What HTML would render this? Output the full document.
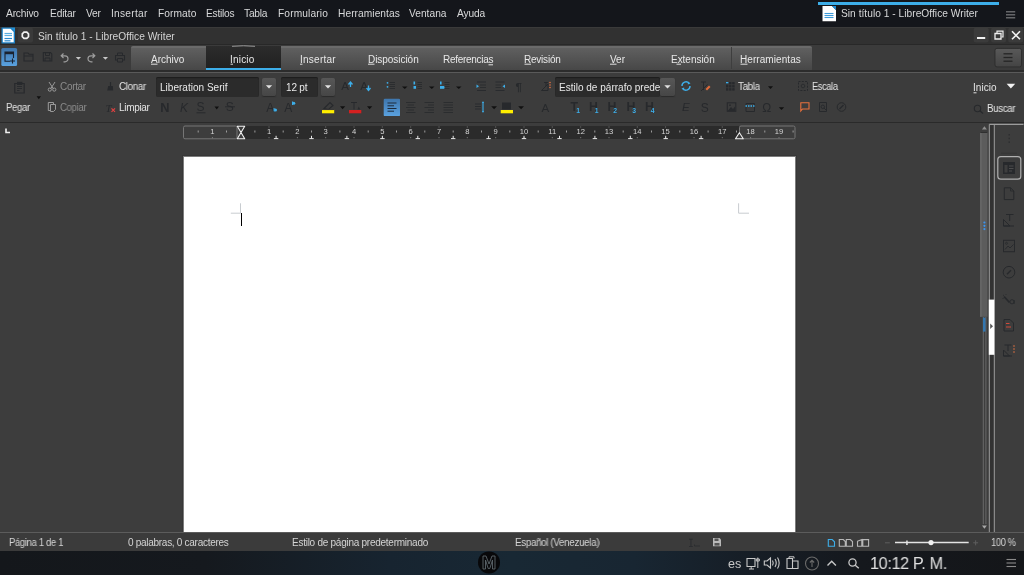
<!DOCTYPE html>
<html><head><meta charset="utf-8"><style>
html,body{margin:0;padding:0;}
body{width:1024px;height:575px;overflow:hidden;position:relative;background:#3d3d3d;font-family:"Liberation Sans",sans-serif;}
body>div{position:absolute;}
.t{white-space:nowrap;line-height:normal;-webkit-font-smoothing:antialiased;will-change:transform;}
svg{position:absolute;overflow:visible;}
</style></head><body>
<div style="left:0px;top:0px;width:1024px;height:27px;background:#14161b;"></div>
<div style="left:818px;top:2px;width:181px;height:2.5px;background:#3daee9;"></div>
<div style="left:0px;top:27px;width:1024px;height:18px;background:#313131;"></div>
<div style="left:0px;top:27px;width:1024px;height:1px;background:#3a3a3a;"></div>
<div style="left:0px;top:44px;width:1024px;height:1px;background:#282828;"></div>
<div style="left:0px;top:45px;width:1024px;height:27px;background:#3b3b3b;"></div>
<div style="left:131px;top:46px;width:681px;height:24px;background:linear-gradient(#6a6a6a 0px,#6a6a6a 1.5px,#5f5f5f 2.5px,#474747 100%);border-radius:2px 2px 0 0;"></div>
<div style="left:206px;top:46px;width:75px;height:24px;background:linear-gradient(#2c2c2c,#202020);"></div>
<div style="left:0px;top:70px;width:1024px;height:2px;background:#2c2c2c;"></div>
<div style="left:206px;top:68.3px;width:75px;height:2px;background:#3daee9;"></div>
<div style="left:0px;top:72px;width:1024px;height:1px;background:#5a5a5a;"></div>
<div style="left:0px;top:73px;width:1024px;height:49px;background:#3c3c3c;"></div>
<div style="left:0px;top:122px;width:1024px;height:1px;background:#2a2a2a;"></div>
<div style="left:156px;top:77px;width:103px;height:20px;background:#2b2b2b;box-shadow:inset 0 1px 1px #1c1c1c;border-radius:2px;"></div>
<div style="left:262px;top:78px;width:14px;height:18px;background:linear-gradient(#575757,#464646);border-radius:2px;box-shadow:0 1px 1px #2a2a2a;"></div>
<div style="left:281px;top:77px;width:37px;height:20px;background:#2b2b2b;box-shadow:inset 0 1px 1px #1c1c1c;border-radius:2px;"></div>
<div style="left:321px;top:78px;width:14px;height:18px;background:linear-gradient(#575757,#464646);border-radius:2px;box-shadow:0 1px 1px #2a2a2a;"></div>
<div style="left:555px;top:77px;width:105px;height:20px;background:#2b2b2b;box-shadow:inset 0 1px 1px #1c1c1c;border-radius:2px;overflow:hidden;"></div>
<div style="left:660px;top:78px;width:15px;height:18px;background:linear-gradient(#575757,#464646);border-radius:2px;box-shadow:0 1px 1px #2a2a2a;"></div>
<div style="left:384px;top:99px;width:16px;height:17px;background:linear-gradient(#5196d6,#3a79b8);border-radius:2px;"></div>
<div style="left:0px;top:123px;width:1024px;height:409px;background:#3d3d3d;"></div>
<div style="left:182px;top:155px;width:615px;height:377px;background:#373737;"></div>
<div style="left:183px;top:156px;width:613px;height:376px;background:#7c7c7c;"></div>
<div style="left:184px;top:157px;width:611px;height:375px;background:#ffffff;"></div>
<div style="left:240.5px;top:213px;width:1.6px;height:12.8px;background:#000;"></div>
<div style="left:0px;top:532px;width:1024px;height:1px;background:#5a5a5a;"></div>
<div style="left:0px;top:533px;width:1024px;height:18px;background:#3b3b3b;"></div>
<div style="left:0px;top:551px;width:1024px;height:24px;background:linear-gradient(90deg,#14171b 0%,#15191e 20%,#172430 38%,#182834 50%,#182632 62%,#161d25 74%,#15181d 84%,#141619 100%);"></div>
<div class="t" style="left:5.90px;top:8.00px;font-size:10.2px;color:#d8d9da;letter-spacing:-0.162px;font-family:'Liberation Sans';font-weight:normal;">Archivo</div>
<div class="t" style="left:49.70px;top:8.00px;font-size:10.2px;color:#d8d9da;letter-spacing:-0.163px;font-family:'Liberation Sans';font-weight:normal;">Editar</div>
<div class="t" style="left:86.00px;top:8.00px;font-size:10.2px;color:#d8d9da;letter-spacing:-0.245px;font-family:'Liberation Sans';font-weight:normal;">Ver</div>
<div class="t" style="left:111.30px;top:8.00px;font-size:10.2px;color:#d8d9da;letter-spacing:0.252px;font-family:'Liberation Sans';font-weight:normal;">Insertar</div>
<div class="t" style="left:157.50px;top:8.00px;font-size:10.2px;color:#d8d9da;letter-spacing:0.078px;font-family:'Liberation Sans';font-weight:normal;">Formato</div>
<div class="t" style="left:205.80px;top:8.00px;font-size:10.2px;color:#d8d9da;letter-spacing:-0.234px;font-family:'Liberation Sans';font-weight:normal;">Estilos</div>
<div class="t" style="left:244.20px;top:8.00px;font-size:10.2px;color:#d8d9da;letter-spacing:-0.213px;font-family:'Liberation Sans';font-weight:normal;">Tabla</div>
<div class="t" style="left:278.00px;top:8.00px;font-size:10.2px;color:#d8d9da;letter-spacing:0.135px;font-family:'Liberation Sans';font-weight:normal;">Formulario</div>
<div class="t" style="left:338.00px;top:8.00px;font-size:10.2px;color:#d8d9da;letter-spacing:0.060px;font-family:'Liberation Sans';font-weight:normal;">Herramientas</div>
<div class="t" style="left:409.20px;top:8.00px;font-size:10.2px;color:#d8d9da;letter-spacing:0.018px;font-family:'Liberation Sans';font-weight:normal;">Ventana</div>
<div class="t" style="left:456.80px;top:8.00px;font-size:10.2px;color:#d8d9da;letter-spacing:-0.125px;font-family:'Liberation Sans';font-weight:normal;">Ayuda</div>
<div class="t" style="left:841.30px;top:8.00px;font-size:10.2px;color:#d8d9da;letter-spacing:0.026px;font-family:'Liberation Sans';font-weight:normal;">Sin título 1 - LibreOffice Writer</div>
<div class="t" style="left:37.50px;top:31.00px;font-size:10.2px;color:#d4d4d4;letter-spacing:0.021px;font-family:'Liberation Sans';font-weight:normal;">Sin título 1 - LibreOffice Writer</div>
<div class="t" style="left:150.80px;top:54.00px;font-size:10px;color:#e8e8e8;letter-spacing:-0.024px;font-family:'Liberation Sans';font-weight:normal;">Archivo</div>
<div class="t" style="left:230.00px;top:54.00px;font-size:10px;color:#e8e8e8;letter-spacing:0.191px;font-family:'Liberation Sans';font-weight:normal;">Inicio</div>
<div class="t" style="left:299.80px;top:54.00px;font-size:10px;color:#e8e8e8;letter-spacing:0.257px;font-family:'Liberation Sans';font-weight:normal;">Insertar</div>
<div class="t" style="left:367.80px;top:54.00px;font-size:10px;color:#e8e8e8;letter-spacing:-0.043px;font-family:'Liberation Sans';font-weight:normal;">Disposición</div>
<div class="t" style="left:442.60px;top:54.00px;font-size:10px;color:#e8e8e8;letter-spacing:-0.286px;font-family:'Liberation Sans';font-weight:normal;">Referencias</div>
<div class="t" style="left:524.40px;top:54.00px;font-size:10px;color:#e8e8e8;letter-spacing:-0.221px;font-family:'Liberation Sans';font-weight:normal;">Revisión</div>
<div class="t" style="left:610.00px;top:54.00px;font-size:10px;color:#e8e8e8;letter-spacing:-0.005px;font-family:'Liberation Sans';font-weight:normal;">Ver</div>
<div class="t" style="left:670.70px;top:54.00px;font-size:10px;color:#e8e8e8;letter-spacing:-0.027px;font-family:'Liberation Sans';font-weight:normal;">Extensión</div>
<div class="t" style="left:740.30px;top:54.00px;font-size:10px;color:#e8e8e8;letter-spacing:0.071px;font-family:'Liberation Sans';font-weight:normal;">Herramientas</div>
<div class="t" style="left:6.25px;top:102.00px;font-size:10px;color:#e0e0e0;letter-spacing:-0.350px;font-family:'Liberation Sans';font-weight:normal;transform:scaleX(0.9591);transform-origin:0 0;">Pegar</div>
<div class="t" style="left:60.20px;top:81.00px;font-size:10px;color:#8c8c8c;letter-spacing:-0.317px;font-family:'Liberation Sans';font-weight:normal;">Cortar</div>
<div class="t" style="left:60.20px;top:102.00px;font-size:10px;color:#8c8c8c;letter-spacing:-0.350px;font-family:'Liberation Sans';font-weight:normal;transform:scaleX(0.9564);transform-origin:0 0;">Copiar</div>
<div class="t" style="left:118.75px;top:81.00px;font-size:10px;color:#e4e4e4;letter-spacing:-0.350px;font-family:'Liberation Sans';font-weight:normal;transform:scaleX(0.9763);transform-origin:0 0;">Clonar</div>
<div class="t" style="left:118.75px;top:102.00px;font-size:10px;color:#e4e4e4;letter-spacing:-0.306px;font-family:'Liberation Sans';font-weight:normal;">Limpiar</div>
<div class="t" style="left:160.00px;top:82.00px;font-size:10px;color:#e8e8e8;letter-spacing:0.016px;font-family:'Liberation Sans';font-weight:normal;">Liberation Serif</div>
<div class="t" style="left:285.50px;top:82.00px;font-size:10px;color:#e8e8e8;letter-spacing:-0.185px;font-family:'Liberation Sans';font-weight:normal;">12 pt</div>
<div class="t" style="left:558.60px;top:82.00px;font-size:10px;color:#e8e8e8;letter-spacing:0.010px;font-family:'Liberation Sans';font-weight:normal;">Estilo de párrafo prede</div>
<div class="t" style="left:738.20px;top:81.00px;font-size:10px;color:#e4e4e4;letter-spacing:-0.350px;font-family:'Liberation Sans';font-weight:normal;transform:scaleX(0.9775);transform-origin:0 0;">Tabla</div>
<div class="t" style="left:811.60px;top:81.00px;font-size:10px;color:#e4e4e4;letter-spacing:-0.350px;font-family:'Liberation Sans';font-weight:normal;transform:scaleX(0.9199);transform-origin:0 0;">Escala</div>
<div class="t" style="left:973.30px;top:82.00px;font-size:10px;color:#e4e4e4;letter-spacing:0.051px;font-family:'Liberation Sans';font-weight:normal;">Inicio</div>
<div class="t" style="left:987.00px;top:103.00px;font-size:10px;color:#e4e4e4;letter-spacing:-0.350px;font-family:'Liberation Sans';font-weight:normal;transform:scaleX(0.9737);transform-origin:0 0;">Buscar</div>
<div class="t" style="left:8.75px;top:537.00px;font-size:10px;color:#d4d4d4;letter-spacing:-0.350px;font-family:'Liberation Sans';font-weight:normal;transform:scaleX(0.9475);transform-origin:0 0;">Página 1 de 1</div>
<div class="t" style="left:127.50px;top:537.00px;font-size:10px;color:#d4d4d4;letter-spacing:-0.284px;font-family:'Liberation Sans';font-weight:normal;">0 palabras, 0 caracteres</div>
<div class="t" style="left:291.75px;top:537.00px;font-size:10px;color:#d4d4d4;letter-spacing:-0.258px;font-family:'Liberation Sans';font-weight:normal;">Estilo de página predeterminado</div>
<div class="t" style="left:515.00px;top:537.00px;font-size:10px;color:#d4d4d4;letter-spacing:-0.350px;font-family:'Liberation Sans';font-weight:normal;transform:scaleX(0.9827);transform-origin:0 0;">Español (Venezuela)</div>
<div class="t" style="left:991.00px;top:537.00px;font-size:10px;color:#d4d4d4;letter-spacing:-0.350px;font-family:'Liberation Sans';font-weight:normal;transform:scaleX(0.9275);transform-origin:0 0;">100 %</div>
<div class="t" style="left:869.80px;top:554.00px;font-size:16.5px;color:#e0e0e0;letter-spacing:-0.350px;font-family:'Liberation Sans';font-weight:normal;transform:scaleX(0.9803);transform-origin:0 0;">10:12 P. M.</div>
<div class="t" style="left:727.60px;top:557.00px;font-size:12.6px;color:#c8c8c8;letter-spacing:0.099px;font-family:'Liberation Sans';font-weight:normal;">es</div>
<svg style="left:0;top:0;" width="1024" height="575" viewBox="0 0 1024 575"><defs><linearGradient id="gblue" x1="0" y1="0" x2="0" y2="1"><stop offset="0" stop-color="#3f76ad"/><stop offset="1" stop-color="#5aa2e0"/></linearGradient><linearGradient id="gbtn" x1="0" y1="0" x2="0" y2="1"><stop offset="0" stop-color="#595959"/><stop offset="1" stop-color="#444444"/></linearGradient></defs><path d="M1.5 27.5H11L15 31.5V43.5H1.5Z" fill="#1a7fc4"/><path d="M2.8 28.8H10.5L13.7 32V42.2H2.8Z" fill="#ffffff"/><path d="M10.5 27.5L15 32V27.5Z" fill="#1e8fd8"/><path d="M4.5 33.5H12" stroke="#5aaee0" stroke-width="1.2"/><path d="M4.5 35.5H12" stroke="#5aaee0" stroke-width="1.2"/><path d="M4.5 38.5H12" stroke="#2a8ad0" stroke-width="1.2"/><path d="M4.5 40.8H10.5" stroke="#2a8ad0" stroke-width="1.2"/><rect x="18" y="27.6" width="15" height="15" rx="2" fill="#3a3a3a"/><path d="M24 32.2H26.8L28.5 33.9V36.7L26.8 38.4H24L22.3 36.7V33.9Z" fill="none" stroke="#f0f0f0" stroke-width="1.7"/><rect x="973.7" y="27.6" width="15" height="15" rx="2.5" fill="#3b3b3b"/><rect x="991" y="27.6" width="15" height="15" rx="2.5" fill="#3b3b3b"/><rect x="1008.2" y="27.6" width="15" height="15" rx="2.5" fill="#3b3b3b"/><path d="M977 38H985.2" stroke="#f2f2f2" stroke-width="2"/><path d="M995 33.5H1001V39H995Z" fill="none" stroke="#eeeeee" stroke-width="1.3"/><path d="M997 33V31.2H1003V37H1001.5" fill="none" stroke="#eeeeee" stroke-width="1.2"/><path d="M1012 31.3L1020 39.3M1020 31.3L1012 39.3" stroke="#f2f2f2" stroke-width="1.6"/><path d="M822.5 6H832L836 10V21.3H822.5Z" fill="#ffffff"/><path d="M832 6L836 10V6Z" fill="#1e8fd8"/><path d="M824.5 13.5H833.5" stroke="#3d9ad8" stroke-width="1.1"/><path d="M824.5 15.5H833.5" stroke="#3d9ad8" stroke-width="1.1"/><path d="M824.5 17.5H833.5" stroke="#3d9ad8" stroke-width="1.1"/><path d="M1006 11.8H1015.2" stroke="#7a7b7d" stroke-width="1.2"/><path d="M1006 14.8H1015.2" stroke="#7a7b7d" stroke-width="1.2"/><path d="M1006 17.8H1015.2" stroke="#7a7b7d" stroke-width="1.2"/><rect x="1.3" y="48" width="15.8" height="18.1" rx="1.5" fill="url(#gblue)"/><path d="M10 61.3H5V52H13.5V58" fill="none" stroke="#1a2230" stroke-width="1.1"/><rect x="5" y="52" width="8.5" height="2.2" fill="#1a2230"/><path d="M12.5 58.5V63.5M10 61H15" stroke="#1a2230" stroke-width="1.1"/><path d="M24 53H28L29 54.2H33V61H24Z" fill="none" stroke="#27292c" stroke-width="1.1"/><path d="M24 56H33" stroke="#27292c"/><path d="M43.3 52.6H50.5L51.8 54V61H43.3Z" fill="none" stroke="#27292c" stroke-width="1.1"/><path d="M45.5 52.6V55.5H49.5V52.6M45 61V58H50V61" fill="none" stroke="#27292c"/><path d="M63.5 53.5L61.2 55.8L63.5 58M61.5 55.8H65A3 3 0 0 1 65 61.8H63.5" fill="none" stroke="#9d9d9d" stroke-width="1.2"/><path d="M75.8 57H81L78.4 59.8Z" fill="#c8c8c8"/><path d="M92.5 53.5L94.8 55.8L92.5 58M94.5 55.8H91A3 3 0 0 0 91 61.8H92.5" fill="none" stroke="#9d9d9d" stroke-width="1.2"/><path d="M102.8 57H108L105.4 59.8Z" fill="#c8c8c8"/><path d="M117.5 53H122.5V55.5H117.5Z" fill="none" stroke="#27292c"/><path d="M115.5 55.5H124.5V60H115.5Z" fill="none" stroke="#27292c" stroke-width="1.1"/><path d="M117.5 58.5H122.5V62H117.5Z" fill="#3b3b3b" stroke="#27292c"/><rect x="995" y="48.4" width="26.5" height="18.5" rx="2" fill="url(#gbtn)" stroke="#2a2a2a" stroke-width="0.8"/><path d="M1003.5 53.8H1012.5" stroke="#252525" stroke-width="1.3"/><path d="M1003.5 57.5H1012.5" stroke="#252525" stroke-width="1.3"/><path d="M1003.5 61.2H1012.5" stroke="#252525" stroke-width="1.3"/><path d="M232 46.3Q243.5 45.2 255 46.3" stroke="#9a9a9a" stroke-width="1" fill="none"/><path d="M731.5 47V69" stroke="#3e3e3e" stroke-width="1"/><path d="M151 64.2H157.5" stroke="#e0e0e0" stroke-width="1"/><path d="M230.5 64.2H233" stroke="#e0e0e0" stroke-width="1"/><path d="M300 64.2H302.5" stroke="#e0e0e0" stroke-width="1"/><path d="M368 64.2H374.5" stroke="#e0e0e0" stroke-width="1"/><path d="M488.5 64.8H493" stroke="#e0e0e0" stroke-width="1"/><path d="M524.5 64.2H531" stroke="#e0e0e0" stroke-width="1"/><path d="M610 64.2H616.5" stroke="#e0e0e0" stroke-width="1"/><path d="M676.5 64.2H681" stroke="#e0e0e0" stroke-width="1"/><path d="M740.5 64.2H747.5" stroke="#e0e0e0" stroke-width="1"/><path d="M973.5 92.8H976.5" stroke="#e0e0e0" stroke-width="1"/><path d="M14.8 83.5H24.2V93H14.8Z" fill="none" stroke="#27292c" stroke-width="1.2"/><rect x="17" y="81.8" width="5.4" height="3.2" fill="#27292c"/><path d="M17 86.5H22" stroke="#27292c" stroke-width="0.9"/><path d="M17 88.5H22" stroke="#27292c" stroke-width="0.9"/><path d="M17 90.5H19.5" stroke="#27292c" stroke-width="0.9"/><path d="M36.6 96.3H41L38.8 99.2Z" fill="#101010"/><path d="M49 82L53.5 89M55 82L50.5 89" stroke="#9a9a9a" stroke-width="1"/><circle cx="49.8" cy="89.6" r="1.6" fill="none" stroke="#9a9a9a"/><circle cx="54.3" cy="89.6" r="1.6" fill="none" stroke="#9a9a9a"/><path d="M48.3 102.5H53.5V104.5M48.3 102.5V110.5H50" fill="none" stroke="#9a9a9a" stroke-width="1"/><path d="M50.5 104.5H55.5V109.5L53.5 111.5H50.5Z" fill="none" stroke="#9a9a9a" stroke-width="1"/><path d="M110.5 82V86" stroke="#27292c" stroke-width="1.2"/><path d="M108.2 86H112.8L113.2 90.5H107.2Z" fill="#27292c"/><text x="105.5" y="111.5" font-family="Liberation Serif" font-size="11" fill="#27292c" font-weight="normal" font-style="italic" text-anchor="start">T</text><path d="M111.5 108.3L115 111.8M115 108.3L111.5 111.8" stroke="#e04040" stroke-width="1.2"/><text x="341.3" y="90.4" font-family="Liberation Sans" font-size="11.5" fill="#27292c" font-weight="normal" font-style="normal" text-anchor="start">A</text><path d="M348.5 84.5L350.5 82L352.5 84.5M350.5 82V87" fill="none" stroke="#3daee9" stroke-width="1.3"/><text x="360.3" y="90.4" font-family="Liberation Sans" font-size="11.5" fill="#27292c" font-weight="normal" font-style="normal" text-anchor="start">A</text><path d="M366.5 88L368.5 90.5L370.5 88M368.5 85.5V90.5" fill="none" stroke="#3daee9" stroke-width="1.3"/><circle cx="387.5" cy="82.8" r="0.9" fill="#3daee9"/><circle cx="387.5" cy="86.8" r="0.9" fill="#3daee9"/><path d="M389.5 82.5H395" stroke="#27292c" stroke-width="0.8"/><path d="M389.5 84.5H395" stroke="#27292c" stroke-width="0.8"/><path d="M389.5 86.5H395" stroke="#27292c" stroke-width="0.8"/><path d="M389.5 88.5H395" stroke="#27292c" stroke-width="0.8"/><path d="M402 86.5H407.5L404.75 89Z" fill="#101010"/><rect x="413.5" y="81.5" width="1.6" height="3" fill="#3daee9"/><rect x="413.5" y="86" width="2.5" height="2.8" fill="#3daee9"/><path d="M417.5 82.5H422" stroke="#27292c" stroke-width="0.8"/><path d="M417.5 84.5H422" stroke="#27292c" stroke-width="0.8"/><path d="M417.5 86.5H422" stroke="#27292c" stroke-width="0.8"/><path d="M417.5 88.5H422" stroke="#27292c" stroke-width="0.8"/><path d="M429 86.5H434.5L431.75 89Z" fill="#101010"/><rect x="440" y="81.5" width="1.6" height="3" fill="#3daee9"/><rect x="440" y="86" width="4.5" height="2.8" fill="#3daee9"/><path d="M444.5 82.5H449.5" stroke="#27292c" stroke-width="0.8"/><path d="M444.5 84.5H449.5" stroke="#27292c" stroke-width="0.8"/><path d="M444.5 86.5H449.5" stroke="#27292c" stroke-width="0.8"/><path d="M444.5 88.5H449.5" stroke="#27292c" stroke-width="0.8"/><path d="M456 86.5H461.5L458.75 89Z" fill="#101010"/><path d="M477 82H486" stroke="#27292c" stroke-width="0.9"/><path d="M477 90.5H486" stroke="#27292c" stroke-width="0.9"/><path d="M480 85H486" stroke="#27292c" stroke-width="0.8"/><path d="M480 87.5H486" stroke="#27292c" stroke-width="0.8"/><path d="M476.5 84.5L479 86.3L476.5 88Z" fill="#3daee9"/><path d="M495.5 82H504.5" stroke="#27292c" stroke-width="0.9"/><path d="M495.5 90.5H504.5" stroke="#27292c" stroke-width="0.9"/><path d="M495.5 85H501" stroke="#27292c" stroke-width="0.8"/><path d="M495.5 87.5H501" stroke="#27292c" stroke-width="0.8"/><path d="M505 84.5L502.5 86.3L505 88Z" fill="#3daee9"/><text x="515.5" y="90.5" font-family="Liberation Sans" font-size="11.5" fill="#27292c" font-weight="bold" font-style="normal" text-anchor="start">¶</text><path d="M541.5 90.5L548 84V90.5Z M544 82.5H548M546 82.5V86" fill="none" stroke="#27292c" stroke-width="1"/><circle cx="550" cy="82.5" r="0.8" fill="#e07040"/><circle cx="550" cy="85" r="0.8" fill="#e07040"/><circle cx="550" cy="87.5" r="0.8" fill="#e07040"/><path d="M682 86A4 4 0 0 1 689 83.2M690 86A4 4 0 0 1 683 88.8" fill="none" stroke="#3daee9" stroke-width="1.4"/><path d="M688 81.5L690.5 83.5L687.8 84.5Z M684 90.5L681.5 88.5L684.2 87.5Z" fill="#3daee9"/><path d="M701 82H706M703.5 82V90" stroke="#27292c" stroke-width="1"/><path d="M701 91L707.5 84.5" stroke="#27292c"/><path d="M705.5 89L709 85.5L710.5 87L707 90.5Z" fill="#e06a3a"/><g fill="#27292c"><rect x="726.0" y="82.0" width="2.4" height="2.4"/><rect x="726.0" y="85.1" width="2.4" height="2.4"/><rect x="726.0" y="88.2" width="2.4" height="2.4"/><rect x="729.1" y="82.0" width="2.4" height="2.4"/><rect x="729.1" y="85.1" width="2.4" height="2.4"/><rect x="729.1" y="88.2" width="2.4" height="2.4"/><rect x="732.2" y="82.0" width="2.4" height="2.4"/><rect x="732.2" y="85.1" width="2.4" height="2.4"/><rect x="732.2" y="88.2" width="2.4" height="2.4"/></g><rect x="726" y="82" width="2.4" height="1.4" fill="#3daee9"/><path d="M768 86.3H773L770.5 89Z" fill="#101010"/><rect x="798.5" y="81.5" width="9" height="9" fill="none" stroke="#27292c" stroke-dasharray="2 1.3"/><circle cx="803" cy="86" r="1.8" fill="none" stroke="#27292c" stroke-width="0.8"/><path d="M1006.6 83.8H1015.2L1010.9000000000001 88.5Z" fill="#f2f2f2"/><circle cx="977.5" cy="108.5" r="3.2" fill="none" stroke="#27292c" stroke-width="1.1"/><path d="M979.8 110.8L983 113.5" stroke="#27292c" stroke-width="1.2"/><text x="160.3" y="111.5" font-family="Liberation Sans" font-size="12.8" fill="#27292c" font-weight="bold" font-style="normal" text-anchor="start">N</text><text x="180" y="111.5" font-family="Liberation Sans" font-size="12" fill="#27292c" font-weight="normal" font-style="italic" text-anchor="start">K</text><text x="196.5" y="110.8" font-family="Liberation Sans" font-size="12" fill="#27292c" font-weight="normal" font-style="normal" text-anchor="start">S</text><path d="M196.5 112.8H205.5" stroke="#27292c" stroke-width="1"/><path d="M214.5 106.5H219L216.75 109.5Z" fill="#101010"/><text x="225.8" y="111.3" font-family="Liberation Sans" font-size="12" fill="#27292c" font-weight="normal" font-style="normal" text-anchor="start">S</text><path d="M225 106.8H235" stroke="#27292c" stroke-width="1"/><text x="266.3" y="111.5" font-family="Liberation Sans" font-size="12" fill="#27292c" font-weight="normal" font-style="normal" text-anchor="start">A</text><circle cx="275.5" cy="110" r="1.5" fill="#3daee9"/><path d="M274.1 108V111.5" stroke="#3daee9"/><text x="284.3" y="111.5" font-family="Liberation Sans" font-size="12" fill="#27292c" font-weight="normal" font-style="normal" text-anchor="start">A</text><circle cx="293.8" cy="103.2" r="1.5" fill="#3daee9"/><path d="M292.5 101.5V105" stroke="#3daee9"/><path d="M324 108.5L330 102.5L333 105.5L328.5 109.5Z" fill="none" stroke="#27292c" stroke-width="1.1"/><rect x="322" y="109.8" width="12.2" height="3.5" fill="#ffee00"/><path d="M322 109.6H334" stroke="#1a1a40" stroke-width="0.6"/><path d="M340 106.2H345.2L342.6 109.2Z" fill="#101010"/><path d="M351 102.5H357M354 102.5V109.5" stroke="#27292c" stroke-width="1"/><path d="M357.5 109.5L358.8 106.5L360.2 109.5Z" fill="#27292c"/><rect x="349" y="110" width="12.3" height="3.3" fill="#d42020"/><path d="M367 106.2H372.2L369.6 109.2Z" fill="#101010"/><rect x="383.7" y="98.8" width="16.3" height="17.3" rx="1.2" fill="url(#gblue)"/><path d="M387.5 103H396.5" stroke="#1e2a3a" stroke-width="1"/><path d="M387.5 108.5H396.5" stroke="#1e2a3a" stroke-width="1"/><path d="M387.5 105.8H394" stroke="#1e2a3a" stroke-width="1"/><path d="M387.5 111.2H394" stroke="#1e2a3a" stroke-width="1"/><path d="M406 102.5H415.5" stroke="#27292c" stroke-width="0.8"/><path d="M406 107.5H415.5" stroke="#27292c" stroke-width="0.8"/><path d="M406 112.5H415.5" stroke="#27292c" stroke-width="0.8"/><path d="M407.5 105H414" stroke="#27292c" stroke-width="0.8"/><path d="M407.5 110H414" stroke="#27292c" stroke-width="0.8"/><path d="M424.5 102.5H434" stroke="#27292c" stroke-width="0.8"/><path d="M424.5 107.5H434" stroke="#27292c" stroke-width="0.8"/><path d="M424.5 112.5H434" stroke="#27292c" stroke-width="0.8"/><path d="M428 105H434" stroke="#27292c" stroke-width="0.8"/><path d="M428 110H434" stroke="#27292c" stroke-width="0.8"/><path d="M443.5 102.5H453" stroke="#27292c" stroke-width="0.8"/><path d="M443.5 105H453" stroke="#27292c" stroke-width="0.8"/><path d="M443.5 107.5H453" stroke="#27292c" stroke-width="0.8"/><path d="M443.5 110H453" stroke="#27292c" stroke-width="0.8"/><path d="M443.5 112.5H453" stroke="#27292c" stroke-width="0.8"/><path d="M475 104H481" stroke="#27292c" stroke-width="0.9"/><path d="M475 106.5H481" stroke="#27292c" stroke-width="0.9"/><path d="M475 109H481" stroke="#27292c" stroke-width="0.9"/><path d="M483 102V112M482 102.3H484M482 111.7H484" stroke="#3daee9" stroke-width="1.1"/><path d="M491.2 106.2H497L494.1 109.2Z" fill="#101010"/><rect x="502" y="102.5" width="9" height="7" fill="#27292c"/><rect x="500.7" y="110" width="12.3" height="3.3" fill="#ffee00"/><path d="M518.2 106.2H524L521.1 109.2Z" fill="#101010"/><text x="541.5" y="111.5" font-family="Liberation Sans" font-size="11.5" fill="#27292c" font-weight="normal" font-style="normal" text-anchor="start">A</text><text x="570.5" y="111.3" font-family="Liberation Sans" font-size="12.3" fill="#27292c" font-weight="bold" font-style="normal" text-anchor="start">T</text><text x="576.3" y="112.6" font-family="Liberation Sans" font-size="6.8" fill="#3daee9" font-weight="bold" font-style="normal" text-anchor="start">1</text><text x="589" y="111.3" font-family="Liberation Sans" font-size="12.3" fill="#27292c" font-weight="bold" font-style="normal" text-anchor="start">H</text><text x="594.8" y="112.6" font-family="Liberation Sans" font-size="6.8" fill="#3daee9" font-weight="bold" font-style="normal" text-anchor="start">1</text><text x="607.5" y="111.3" font-family="Liberation Sans" font-size="12.3" fill="#27292c" font-weight="bold" font-style="normal" text-anchor="start">H</text><text x="613.3" y="112.6" font-family="Liberation Sans" font-size="6.8" fill="#3daee9" font-weight="bold" font-style="normal" text-anchor="start">2</text><text x="626.5" y="111.3" font-family="Liberation Sans" font-size="12.3" fill="#27292c" font-weight="bold" font-style="normal" text-anchor="start">H</text><text x="632.3" y="112.6" font-family="Liberation Sans" font-size="6.8" fill="#3daee9" font-weight="bold" font-style="normal" text-anchor="start">3</text><text x="645" y="111.3" font-family="Liberation Sans" font-size="12.3" fill="#27292c" font-weight="bold" font-style="normal" text-anchor="start">H</text><text x="650.8" y="112.6" font-family="Liberation Sans" font-size="6.8" fill="#3daee9" font-weight="bold" font-style="normal" text-anchor="start">4</text><text x="682" y="111.3" font-family="Liberation Sans" font-size="11.5" fill="#27292c" font-weight="normal" font-style="italic" text-anchor="start">E</text><text x="700.8" y="111.5" font-family="Liberation Sans" font-size="12" fill="#27292c" font-weight="normal" font-style="normal" text-anchor="start">S</text><rect x="727.3" y="102.8" width="8.5" height="8.5" fill="none" stroke="#27292c" stroke-width="1.1"/><path d="M728 110.5L731 107L733 109L735 106.5V111H728Z" fill="#27292c"/><circle cx="730" cy="105.2" r="0.9" fill="#27292c"/><path d="M746 103.5H754.5V111.5H746Z" fill="none" stroke="#27292c" stroke-width="1"/><path d="M745.5 106H755.5" stroke="#3daee9" stroke-width="1.4" stroke-dasharray="1.5 1"/><text x="762.3" y="111.6" font-family="Liberation Sans" font-size="12" fill="#27292c" font-weight="normal" font-style="normal" text-anchor="start">Ω</text><path d="M778.8 107.2H784.2L781.5 109.9Z" fill="#101010"/><path d="M800.3 102.8H809V109H802.5L800.8 111V102.8Z" fill="none" stroke="#e8703c" stroke-width="1.1"/><path d="M819.5 102.5H826.5V111.5H819.5Z" fill="none" stroke="#27292c" stroke-width="1"/><circle cx="822.8" cy="106.8" r="1.7" fill="none" stroke="#27292c" stroke-width="0.9"/><path d="M824 108L826 110" stroke="#27292c"/><circle cx="841.5" cy="107" r="4.3" fill="none" stroke="#27292c" stroke-width="1"/><path d="M839.5 109L843.5 105" stroke="#27292c" stroke-width="1.2"/><rect x="183.5" y="126" width="53.5" height="12.8" rx="1.5" fill="none" stroke="#767676" stroke-width="1"/><rect x="241" y="126" width="498" height="13" fill="#2b2b2b"/><rect x="739.5" y="126" width="55.5" height="12.8" rx="1.5" fill="none" stroke="#767676" stroke-width="1"/><text x="212.4" y="134.2" font-family="Liberation Sans" font-size="7.6" fill="#d6d6d6" text-anchor="middle">1</text><path d="M212.4 137.2V138.2" stroke="#9a9a9a" stroke-width="0.8"/><text x="269.0" y="134.2" font-family="Liberation Sans" font-size="7.6" fill="#d6d6d6" text-anchor="middle">1</text><path d="M269.0 137.2V138.2" stroke="#9a9a9a" stroke-width="0.8"/><text x="297.4" y="134.2" font-family="Liberation Sans" font-size="7.6" fill="#d6d6d6" text-anchor="middle">2</text><path d="M297.4 137.2V138.2" stroke="#9a9a9a" stroke-width="0.8"/><text x="325.7" y="134.2" font-family="Liberation Sans" font-size="7.6" fill="#d6d6d6" text-anchor="middle">3</text><path d="M325.7 137.2V138.2" stroke="#9a9a9a" stroke-width="0.8"/><text x="354.0" y="134.2" font-family="Liberation Sans" font-size="7.6" fill="#d6d6d6" text-anchor="middle">4</text><path d="M354.0 137.2V138.2" stroke="#9a9a9a" stroke-width="0.8"/><text x="382.3" y="134.2" font-family="Liberation Sans" font-size="7.6" fill="#d6d6d6" text-anchor="middle">5</text><path d="M382.3 137.2V138.2" stroke="#9a9a9a" stroke-width="0.8"/><text x="410.7" y="134.2" font-family="Liberation Sans" font-size="7.6" fill="#d6d6d6" text-anchor="middle">6</text><path d="M410.7 137.2V138.2" stroke="#9a9a9a" stroke-width="0.8"/><text x="439.0" y="134.2" font-family="Liberation Sans" font-size="7.6" fill="#d6d6d6" text-anchor="middle">7</text><path d="M439.0 137.2V138.2" stroke="#9a9a9a" stroke-width="0.8"/><text x="467.3" y="134.2" font-family="Liberation Sans" font-size="7.6" fill="#d6d6d6" text-anchor="middle">8</text><path d="M467.3 137.2V138.2" stroke="#9a9a9a" stroke-width="0.8"/><text x="495.7" y="134.2" font-family="Liberation Sans" font-size="7.6" fill="#d6d6d6" text-anchor="middle">9</text><path d="M495.7 137.2V138.2" stroke="#9a9a9a" stroke-width="0.8"/><text x="524.0" y="134.2" font-family="Liberation Sans" font-size="7.6" fill="#d6d6d6" text-anchor="middle">10</text><path d="M524.0 137.2V138.2" stroke="#9a9a9a" stroke-width="0.8"/><text x="552.3" y="134.2" font-family="Liberation Sans" font-size="7.6" fill="#d6d6d6" text-anchor="middle">11</text><path d="M552.3 137.2V138.2" stroke="#9a9a9a" stroke-width="0.8"/><text x="580.7" y="134.2" font-family="Liberation Sans" font-size="7.6" fill="#d6d6d6" text-anchor="middle">12</text><path d="M580.7 137.2V138.2" stroke="#9a9a9a" stroke-width="0.8"/><text x="609.0" y="134.2" font-family="Liberation Sans" font-size="7.6" fill="#d6d6d6" text-anchor="middle">13</text><path d="M609.0 137.2V138.2" stroke="#9a9a9a" stroke-width="0.8"/><text x="637.3" y="134.2" font-family="Liberation Sans" font-size="7.6" fill="#d6d6d6" text-anchor="middle">14</text><path d="M637.3 137.2V138.2" stroke="#9a9a9a" stroke-width="0.8"/><text x="665.6" y="134.2" font-family="Liberation Sans" font-size="7.6" fill="#d6d6d6" text-anchor="middle">15</text><path d="M665.6 137.2V138.2" stroke="#9a9a9a" stroke-width="0.8"/><text x="694.0" y="134.2" font-family="Liberation Sans" font-size="7.6" fill="#d6d6d6" text-anchor="middle">16</text><path d="M694.0 137.2V138.2" stroke="#9a9a9a" stroke-width="0.8"/><text x="722.3" y="134.2" font-family="Liberation Sans" font-size="7.6" fill="#d6d6d6" text-anchor="middle">17</text><path d="M722.3 137.2V138.2" stroke="#9a9a9a" stroke-width="0.8"/><text x="750.6" y="134.2" font-family="Liberation Sans" font-size="7.6" fill="#d6d6d6" text-anchor="middle">18</text><path d="M750.6 137.2V138.2" stroke="#9a9a9a" stroke-width="0.8"/><text x="779.0" y="134.2" font-family="Liberation Sans" font-size="7.6" fill="#d6d6d6" text-anchor="middle">19</text><path d="M779.0 137.2V138.2" stroke="#9a9a9a" stroke-width="0.8"/><path d="M198.2 130.5V132.5" stroke="#a8a8a8" stroke-width="0.9"/><path d="M226.5 130.5V132.5" stroke="#a8a8a8" stroke-width="0.9"/><path d="M254.9 130.5V132.5" stroke="#a8a8a8" stroke-width="0.9"/><path d="M283.2 130.5V132.5" stroke="#a8a8a8" stroke-width="0.9"/><path d="M311.5 130.5V132.5" stroke="#a8a8a8" stroke-width="0.9"/><path d="M339.9 130.5V132.5" stroke="#a8a8a8" stroke-width="0.9"/><path d="M368.2 130.5V132.5" stroke="#a8a8a8" stroke-width="0.9"/><path d="M396.5 130.5V132.5" stroke="#a8a8a8" stroke-width="0.9"/><path d="M424.8 130.5V132.5" stroke="#a8a8a8" stroke-width="0.9"/><path d="M453.2 130.5V132.5" stroke="#a8a8a8" stroke-width="0.9"/><path d="M481.5 130.5V132.5" stroke="#a8a8a8" stroke-width="0.9"/><path d="M509.8 130.5V132.5" stroke="#a8a8a8" stroke-width="0.9"/><path d="M538.2 130.5V132.5" stroke="#a8a8a8" stroke-width="0.9"/><path d="M566.5 130.5V132.5" stroke="#a8a8a8" stroke-width="0.9"/><path d="M594.8 130.5V132.5" stroke="#a8a8a8" stroke-width="0.9"/><path d="M623.2 130.5V132.5" stroke="#a8a8a8" stroke-width="0.9"/><path d="M651.5 130.5V132.5" stroke="#a8a8a8" stroke-width="0.9"/><path d="M679.8 130.5V132.5" stroke="#a8a8a8" stroke-width="0.9"/><path d="M708.1 130.5V132.5" stroke="#a8a8a8" stroke-width="0.9"/><path d="M736.5 130.5V132.5" stroke="#a8a8a8" stroke-width="0.9"/><path d="M764.8 130.5V132.5" stroke="#a8a8a8" stroke-width="0.9"/><path d="M793.1 130.5V132.5" stroke="#a8a8a8" stroke-width="0.9"/><path d="M269.0 126.5V127.5" stroke="#8a8a8a" stroke-width="0.8"/><path d="M297.4 126.5V127.5" stroke="#8a8a8a" stroke-width="0.8"/><path d="M325.7 126.5V127.5" stroke="#8a8a8a" stroke-width="0.8"/><path d="M354.0 126.5V127.5" stroke="#8a8a8a" stroke-width="0.8"/><path d="M382.3 126.5V127.5" stroke="#8a8a8a" stroke-width="0.8"/><path d="M410.7 126.5V127.5" stroke="#8a8a8a" stroke-width="0.8"/><path d="M439.0 126.5V127.5" stroke="#8a8a8a" stroke-width="0.8"/><path d="M467.3 126.5V127.5" stroke="#8a8a8a" stroke-width="0.8"/><path d="M495.7 126.5V127.5" stroke="#8a8a8a" stroke-width="0.8"/><path d="M524.0 126.5V127.5" stroke="#8a8a8a" stroke-width="0.8"/><path d="M552.3 126.5V127.5" stroke="#8a8a8a" stroke-width="0.8"/><path d="M580.7 126.5V127.5" stroke="#8a8a8a" stroke-width="0.8"/><path d="M609.0 126.5V127.5" stroke="#8a8a8a" stroke-width="0.8"/><path d="M637.3 126.5V127.5" stroke="#8a8a8a" stroke-width="0.8"/><path d="M665.6 126.5V127.5" stroke="#8a8a8a" stroke-width="0.8"/><path d="M694.0 126.5V127.5" stroke="#8a8a8a" stroke-width="0.8"/><path d="M722.3 126.5V127.5" stroke="#8a8a8a" stroke-width="0.8"/><path d="M273.9 138.6H278.3M276.1 138.6V135.8" stroke="#e8e8e8" stroke-width="1"/><path d="M309.3 138.6H313.7M311.5 138.6V135.8" stroke="#e8e8e8" stroke-width="1"/><path d="M344.7 138.6H349.1M346.9 138.6V135.8" stroke="#e8e8e8" stroke-width="1"/><path d="M380.2 138.6H384.6M382.4 138.6V135.8" stroke="#e8e8e8" stroke-width="1"/><path d="M415.6 138.6H420.0M417.8 138.6V135.8" stroke="#e8e8e8" stroke-width="1"/><path d="M451.0 138.6H455.4M453.2 138.6V135.8" stroke="#e8e8e8" stroke-width="1"/><path d="M486.4 138.6H490.8M488.6 138.6V135.8" stroke="#e8e8e8" stroke-width="1"/><path d="M521.8 138.6H526.2M524.0 138.6V135.8" stroke="#e8e8e8" stroke-width="1"/><path d="M557.3 138.6H561.7M559.5 138.6V135.8" stroke="#e8e8e8" stroke-width="1"/><path d="M592.7 138.6H597.1M594.9 138.6V135.8" stroke="#e8e8e8" stroke-width="1"/><path d="M628.1 138.6H632.5M630.3 138.6V135.8" stroke="#e8e8e8" stroke-width="1"/><path d="M663.5 138.6H667.9M665.7 138.6V135.8" stroke="#e8e8e8" stroke-width="1"/><path d="M698.9 138.6H703.3M701.1 138.6V135.8" stroke="#e8e8e8" stroke-width="1"/><path d="M237.3 126.3H244.7L241 132.5ZM237.3 138.7H244.7L241 132.5Z" fill="#3c3c3c" stroke="#f0f0f0" stroke-width="1.1" stroke-linejoin="round"/><path d="M735.5 138.7H743.3L739.4 132.7Z" fill="#3c3c3c" stroke="#f0f0f0" stroke-width="1.1" stroke-linejoin="round"/><path d="M6 128.5V132.5H10" fill="none" stroke="#f0f0f0" stroke-width="1.6"/><path d="M240.5 203.3V213.2H230.8" fill="none" stroke="#c8ccd0" stroke-width="1"/><path d="M738.6 203.3V213.2H749" fill="none" stroke="#c8ccd0" stroke-width="1"/><path d="M981.9 129.6L984.4 126.3L986.9 129.6Z" fill="#8e8e8e"/><path d="M981.9 525.5L984.4 528.8L986.9 525.5Z" fill="#a8a8a8"/><rect x="980.2" y="132" width="7.3" height="184.8" fill="#5c5c5c"/><rect x="980.2" y="132" width="1.3" height="184.8" fill="#6a6a6a"/><rect x="980.2" y="132" width="7.3" height="1" fill="#2f2f2f"/><path d="M983.3 317V524M985.9 317V524" stroke="#6e6e6e" stroke-width="0.9"/><rect x="983" y="317.6" width="2.5" height="14" fill="#3477b0"/><circle cx="984.4" cy="222.5" r="1.1" fill="#3a94f0"/><circle cx="984.4" cy="225.8" r="1.1" fill="#3a94f0"/><circle cx="984.4" cy="229.1" r="1.1" fill="#3a94f0"/><rect x="989.8" y="124.8" width="4" height="407" fill="#323232"/><path d="M989.3 124.3V532M994.3 124.3V532" stroke="#9c9c9c" stroke-width="1"/><path d="M989.3 124.3H1023.5" stroke="#9c9c9c" stroke-width="1.2"/><rect x="988.8" y="299.6" width="5.5" height="55.2" fill="#ffffff"/><path d="M990.2 323.5L993 326.2L990.2 329Z" fill="#555"/><path d="M0 532.5H1024" stroke="#5c5c5c" stroke-width="1"/><g fill="#2e2f31"><rect x="1008.5" y="134" width="1.5" height="1.5"/><rect x="1008.5" y="137.7" width="1.5" height="1.5"/><rect x="1008.5" y="141.4" width="1.5" height="1.5"/></g><path d="M1001 153.3H1017" stroke="#363636" stroke-width="1"/><rect x="997.8" y="156.6" width="23" height="22.6" rx="3" fill="none" stroke="#b0b0b0" stroke-width="1.2"/><rect x="1003" y="162" width="12" height="12" fill="#27292c"/><rect x="1004.5" y="165" width="3" height="7.5" fill="#3e3e3e"/><path d="M1009 166H1013.5M1009 168.5H1013.5M1009 171H1012" stroke="#555" stroke-width="0.8"/><path d="M1004.3 187.8H1010.5L1013.8 191V199.6H1004.3Z" fill="none" stroke="#27292c" stroke-width="1"/><path d="M1010.5 187.8V191H1013.8" fill="none" stroke="#27292c" stroke-width="0.8"/><path d="M1006 214.5H1013.5M1009.7 214.5V221M1003.5 226V219.5L1010 226H1003.5M1003.5 226H1014" fill="none" stroke="#27292c" stroke-width="1"/><rect x="1003.5" y="240.3" width="11" height="11.4" fill="none" stroke="#27292c" stroke-width="1"/><path d="M1005 249.5L1008 246L1010 248L1013.5 244.5" fill="none" stroke="#27292c" stroke-width="0.9"/><circle cx="1006.5" cy="243.3" r="1" fill="none" stroke="#27292c" stroke-width="0.7"/><circle cx="1009" cy="272.2" r="5.8" fill="none" stroke="#27292c" stroke-width="1"/><path d="M1007 274.2L1011 270.2" stroke="#27292c" stroke-width="1.4"/><path d="M1004 296.5L1009.5 302.5" stroke="#27292c" stroke-width="1.8"/><path d="M1003.5 294.8V295.8M1002.5 298.5H1003.5M1006 294.2V295" stroke="#27292c" stroke-width="0.8"/><circle cx="1012" cy="301.8" r="2.1" fill="none" stroke="#27292c" stroke-width="0.9"/><path d="M1014.1 300V304" stroke="#27292c" stroke-width="0.9"/><path d="M1004 319.5H1010L1013.5 323V331H1004Z" fill="none" stroke="#27292c" stroke-width="1"/><path d="M1006 323.5H1009.5M1006 327H1011" stroke="#d04a3a" stroke-width="1"/><path d="M1004.5 345H1011.5M1008 345V351M1003.5 356V350L1009.5 356H1003.5M1003.5 356H1012" fill="none" stroke="#27292c" stroke-width="1"/><circle cx="1014" cy="346" r="0.8" fill="#e07040"/><circle cx="1014" cy="349" r="0.8" fill="#e07040"/><circle cx="1014" cy="352" r="0.8" fill="#e07040"/><path d="M265.8 85.3H272.2L269.0 88.5Z" fill="#e0e0e0"/><path d="M324.8 85.3H331.2L328.0 88.5Z" fill="#e0e0e0"/><path d="M664.3 85.3H670.7L667.5 88.5Z" fill="#e0e0e0"/><path d="M689 539.2H692.8M690.9 539.2V546.5M689 546.5H692.8" stroke="#2b2d30" stroke-width="1"/><path d="M694.5 544.5V546H700" fill="none" stroke="#2b2d30" stroke-width="0.9"/><path d="M713 538H719.5L721 539.5V546.2H713Z" fill="#b8b8b8"/><rect x="714.5" y="538.5" width="4" height="2.5" fill="#555"/><rect x="714.5" y="543" width="5" height="2.6" fill="#555"/><path d="M828.3 539.5H832.2L834.5 541.8V546.3H828.3Z" fill="none" stroke="#3daee9" stroke-width="1.1"/><path d="M839.3 539.5H843.3L845.3 541.5V546.3H839.3ZM846.3 539.5H850.3L852.5 541.5V546.3H846.3Z" fill="none" stroke="#b8b8b8" stroke-width="1.1"/><path d="M857.5 541.3L861.8 539.6V546.3L857.5 546.3ZM862.8 539.6H868.6V546.3H862.8Z" fill="none" stroke="#b8b8b8" stroke-width="1.1"/><path d="M885 542.8H889.8M973.2 542.8H978.1M975.65 540.3V545.3" stroke="#5e5e5e" stroke-width="1"/><path d="M895 542.6H968.7" stroke="#e4e4e4" stroke-width="1.5"/><rect x="906.2" y="540.5" width="1.5" height="4.5" fill="#e4e4e4"/><circle cx="931" cy="542.6" r="2.6" fill="#f0f0f0"/><circle cx="489" cy="562.4" r="11" fill="#08080a"/><path d="M483 569V556H486L489 564L492 556H495V569H492.5V560L489.8 568.5H488.2L485.5 560V569Z" fill="#0a0a0c" stroke="#5d666c" stroke-width="0.9"/><path d="M747 558.5H755V566.5H747Z" fill="none" stroke="#c8c8c8" stroke-width="1.1"/><path d="M749 569H754M751.2 566.5V569" stroke="#c8c8c8" stroke-width="1"/><path d="M757.8 557.5V568M756.3 559H759.3V561H756.3Z" fill="none" stroke="#c8c8c8" stroke-width="1"/><path d="M764.3 561H767L770.5 558V568L767 565H764.3Z" fill="none" stroke="#c8c8c8" stroke-width="1.1"/><path d="M772.5 560.5Q774 563 772.5 565.5M775 559Q777.5 563 775 567M777.5 557.5Q780.8 563 777.5 568.5" fill="none" stroke="#c8c8c8" stroke-width="1.1"/><path d="M787 558.5H792.5V568.5H787Z" fill="none" stroke="#c8c8c8" stroke-width="1.1"/><path d="M789 558.5V556.8H794V558.5" fill="none" stroke="#c8c8c8" stroke-width="1"/><path d="M792.5 561H798V568.5H792.5" fill="none" stroke="#c8c8c8" stroke-width="1.1"/><circle cx="812" cy="563.5" r="6.5" fill="none" stroke="#6a6a6a" stroke-width="1.1"/><path d="M812 567V560.5M809.8 562.5L812 560.3L814.2 562.5" fill="none" stroke="#6a6a6a" stroke-width="1.1"/><path d="M827.5 565.5L831.7 561.3L835.9 565.5" fill="none" stroke="#c8c8c8" stroke-width="1.4"/><circle cx="852.5" cy="562.5" r="3.6" fill="none" stroke="#c8c8c8" stroke-width="1.3"/><path d="M855.2 565.2L858.8 568.3" stroke="#c8c8c8" stroke-width="1.4"/><path d="M1006.5 559.5H1016" stroke="#8a8a8a" stroke-width="1.1"/><path d="M1006.5 563H1016" stroke="#8a8a8a" stroke-width="1.1"/><path d="M1006.5 566.5H1016" stroke="#8a8a8a" stroke-width="1.1"/></svg>
</body></html>
